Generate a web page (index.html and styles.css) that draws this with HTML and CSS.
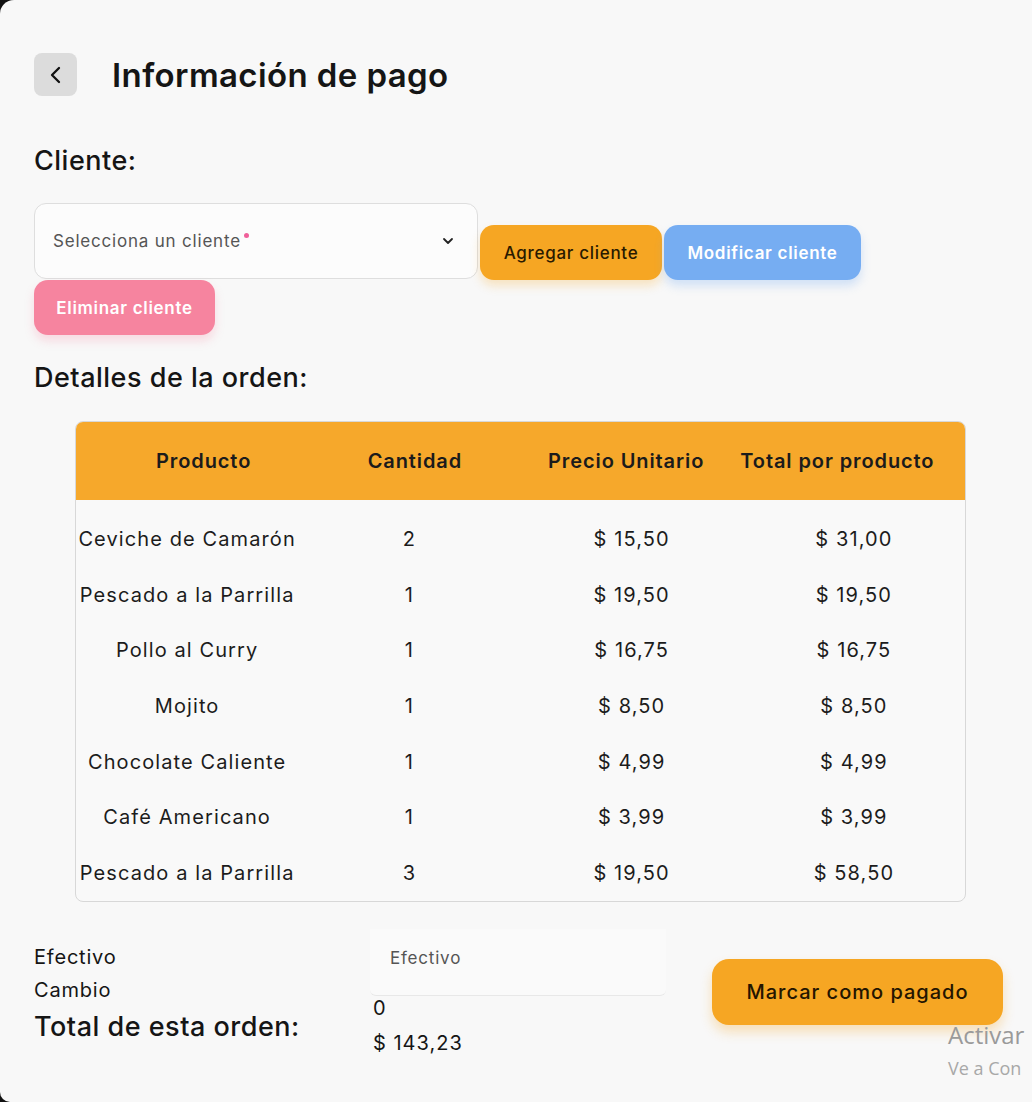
FILE: index.html
```html
<!DOCTYPE html>
<html lang="es">
<head>
<meta charset="utf-8">
<title>Información de pago</title>
<link rel="stylesheet" href="styles.css">
</head>
<body>
<div class="screen">
  <header class="topbar">
    <button class="back" aria-label="Volver">
      <svg width="22" height="22" viewBox="0 0 22 22"><path d="M14 4 L7 11 L14 18" fill="none" stroke="#111" stroke-width="2.3" stroke-linecap="round" stroke-linejoin="round"/></svg>
    </button>
    <h1 class="title">Información de pago</h1>
  </header>

  <h2 class="section-label client-label">Cliente:</h2>
  <div class="client-row">
    <div class="select">
      <span class="placeholder">Selecciona un cliente<span class="req"></span></span>
      <svg class="chev" width="14" height="14" viewBox="0 0 14 14"><path d="M3 5 L7 9 L11 5" fill="none" stroke="#222" stroke-width="1.8" stroke-linecap="round" stroke-linejoin="round"/></svg>
    </div>
    <button class="btn btn-orange">Agregar cliente</button>
    <button class="btn btn-blue">Modificar cliente</button>
    <button class="btn btn-pink">Eliminar cliente</button>
  </div>

  <h2 class="section-label order-label">Detalles de la orden:</h2>
  <div class="table">
    <div class="thead">
      <div>Producto</div><div>Cantidad</div><div>Precio Unitario</div><div>Total por producto</div>
    </div>
    <div class="tbody">
      <div class="row"><div>Ceviche de Camarón</div><div>2</div><div>$ 15,50</div><div>$ 31,00</div></div>
      <div class="row"><div>Pescado a la Parrilla</div><div>1</div><div>$ 19,50</div><div>$ 19,50</div></div>
      <div class="row"><div>Pollo al Curry</div><div>1</div><div>$ 16,75</div><div>$ 16,75</div></div>
      <div class="row"><div>Mojito</div><div>1</div><div>$ 8,50</div><div>$ 8,50</div></div>
      <div class="row"><div>Chocolate Caliente</div><div>1</div><div>$ 4,99</div><div>$ 4,99</div></div>
      <div class="row"><div>Café Americano</div><div>1</div><div>$ 3,99</div><div>$ 3,99</div></div>
      <div class="row"><div>Pescado a la Parrilla</div><div>3</div><div>$ 19,50</div><div>$ 58,50</div></div>
    </div>
  </div>

  <div class="payment">
    <div class="labels">
      <div class="lbl">Efectivo</div>
      <div class="lbl">Cambio</div>
      <div class="total-lbl">Total de esta orden:</div>
    </div>
    <div class="values">
      <div class="input">Efectivo</div>
      <div class="val">0</div>
      <div class="val total-val">$ 143,23</div>
    </div>
    <button class="btn-pay">Marcar como pagado</button>
  </div>

  <div class="watermark">
    <div class="wm1">Activar</div>
    <div class="wm2">Ve a Con</div>
  </div>
</div>
</body>
</html>
```

FILE: styles.css
```css
* { box-sizing: border-box; }
html, body { margin: 0; padding: 0; }
body {
  background: #111;
  font-family: Inter, "Noto Sans", sans-serif;
  color: #151515;
  width: 1032px;
  height: 1102px;
  overflow: hidden;
}
.screen {
  position: relative;
  width: 1032px;
  height: 1102px;
  background: #f8f8f8;
  border-radius: 14px 0 0 10px;
  padding: 53px 0 0 34px;
}
.topbar {
  display: flex;
  align-items: center;
  gap: 35px;
}
.back {
  width: 43px;
  height: 43px;
  border: none;
  border-radius: 8px;
  background: #dcdcdc;
  display: flex;
  align-items: center;
  justify-content: center;
  padding: 0;
}
.title {
  margin: 0;
  font-size: 33px;
  font-weight: 600;
  letter-spacing: 0.4px;
}
.section-label {
  margin: 0;
  font-size: 27px;
  font-weight: 500;
  letter-spacing: 0.5px;
}
.client-label { margin-top: 48px; }
.client-row {
  margin-top: 26px;
  display: flex;
  flex-wrap: wrap;
  align-items: flex-end;
  width: 840px;
}
.select {
  width: 444px;
  height: 76px;
  background: #fcfcfc;
  border: 1px solid #dedede;
  border-radius: 12px;
  display: flex;
  align-items: center;
  justify-content: space-between;
  padding: 0 22px 0 18px;
}
.placeholder {
  font-size: 17px;
  color: #555;
  letter-spacing: 0.8px;
  position: relative;
}
.req {
  display: inline-block;
  width: 5px;
  height: 5px;
  border-radius: 50%;
  background: #f0609a;
  margin-left: 3px;
  vertical-align: 9px;
}
.btn {
  height: 55px;
  border: none;
  border-radius: 14px;
  font-family: Inter, "Noto Sans", sans-serif;
  font-size: 17px;
  letter-spacing: 0.7px;
  padding: 0;
}
.btn-orange {
  width: 182px;
  margin-left: 2px;
  margin-bottom: -1px;
  background: #f6a623;
  color: #2a1a00;
  font-weight: 500;
  box-shadow: 0 6px 10px rgba(246, 166, 35, 0.25);
}
.btn-blue {
  width: 197px;
  margin-left: 2px;
  margin-bottom: -1px;
  background: #76adf2;
  color: #fff;
  font-weight: 600;
  box-shadow: 0 6px 10px rgba(118, 173, 242, 0.3);
}
.btn-pink {
  width: 181px;
  margin-top: 1px;
  background: #f6849f;
  color: #fff;
  font-weight: 600;
  box-shadow: 0 6px 10px rgba(246, 132, 159, 0.25);
}
.order-label { margin-top: 26px; }
.table {
  margin: 27px 0 0 41px;
  width: 891px;
  border: 1px solid #d8d8d8;
  border-radius: 8px;
  overflow: hidden;
  background: #f9f9f9;
}
.thead {
  display: grid;
  grid-template-columns: repeat(4, 1fr);
  padding: 0 22px;
  height: 78px;
  align-items: center;
  background: #f6a82b;
  text-align: center;
  font-size: 20px;
  font-weight: 600;
  letter-spacing: 0.9px;
  color: #1b1b1b;
}
.tbody { padding: 11px 0 0; }
.row {
  display: grid;
  grid-template-columns: repeat(4, 1fr);
  height: 55.7px;
  align-items: center;
  text-align: center;
  font-size: 20px;
  color: #1c1c1c;
  letter-spacing: 1.1px;
}
.payment {
  margin-top: 27px;
  display: flex;
  align-items: flex-start;
  width: 970px;
}
.labels {
  width: 336px;
  padding-top: 12px;
}
.lbl {
  font-size: 20px;
  line-height: 33px;
  letter-spacing: 0.8px;
}
.total-lbl {
  font-size: 27px;
  font-weight: 500;
  line-height: 34px;
  margin-top: 3px;
  letter-spacing: 0.5px;
}
.values {
  width: 296px;
}
.input {
  height: 67px;
  border-bottom: 1px solid #e8e8e8;
  border-radius: 0 0 6px 6px;
  background: #fafafa;
  font-size: 17px;
  color: #555;
  padding: 19px 0 0 20px;
  letter-spacing: 0.8px;
}
.val {
  font-size: 20px;
  line-height: 30px;
  margin-top: -3px;
  padding-left: 3px;
  letter-spacing: 1px;
}
.total-val { margin-top: 5px; }
.btn-pay {
  margin-left: 46px;
  margin-top: 30px;
  width: 291px;
  height: 66px;
  border: none;
  border-radius: 17px;
  background: #f6a623;
  color: #241500;
  font-family: Inter, "Noto Sans", sans-serif;
  font-size: 20px;
  font-weight: 500;
  letter-spacing: 1px;
  box-shadow: 0 7px 12px rgba(246, 166, 35, 0.3);
}
.watermark {
  position: absolute;
  left: 948px;
  top: 1020px;
  font-family: "Open Sans", "Noto Sans", sans-serif;
  color: #9a9a9a;
  white-space: nowrap;
}
.wm1 { font-size: 24px; line-height: 30px; }
.wm2 { font-size: 18px; line-height: 28px; margin-top: 4px; color: #a8a8a8; }
```
